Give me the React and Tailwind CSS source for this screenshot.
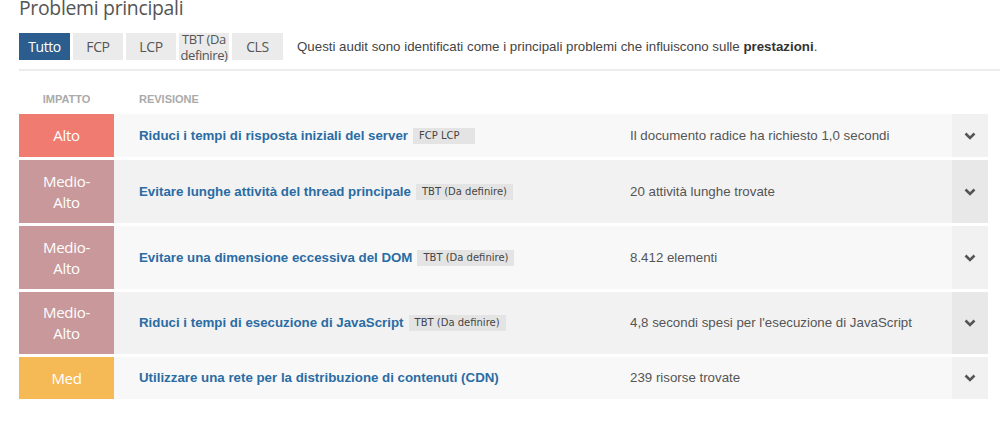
import React from "react";

const rows = [
  { impact: ["Alto"], color: "bg-[#ef7b71]", title: "Riduci i tempi di risposta iniziali del server", tag: "FCP LCP", tagW: "w-[62px]", desc: "Il documento radice ha richiesto 1,0 secondi", h: "h-[43px]", alt: false },
  { impact: ["Medio-", "Alto"], color: "bg-[#c9989a]", title: "Evitare lunghe attività del thread principale", tag: "TBT (Da definire)", desc: "20 attività lunghe trovate", h: "h-[63px]", alt: true },
  { impact: ["Medio-", "Alto"], color: "bg-[#c9989a]", title: "Evitare una dimensione eccessiva del DOM", tag: "TBT (Da definire)", desc: "8.412 elementi", h: "h-[63px]", alt: false },
  { impact: ["Medio-", "Alto"], color: "bg-[#c9989a]", title: "Riduci i tempi di esecuzione di JavaScript", tag: "TBT (Da definire)", desc: "4,8 secondi spesi per l'esecuzione di JavaScript", h: "h-[62px]", alt: true },
  { impact: ["Med"], color: "bg-[#f5b955]", title: "Utilizzare una rete per la distribuzione di contenuti (CDN)", tag: null, desc: "239 risorse trovate", h: "h-[42px]", alt: false },
];

function Chevron() {
  return (
    <svg width="12" height="8" viewBox="0 0 12 8" className="block">
      <path d="M1.5 1.5 L6 6 L10.5 1.5" fill="none" stroke="#555" strokeWidth="2.6" strokeLinecap="butt" />
    </svg>
  );
}

export default function App() {
  return (
    <div className="w-[1000px] h-[426px] bg-white overflow-hidden pl-[19px] font-['Liberation_Sans',Arial,sans-serif]">
      <h1 className="font-['Open_Sans',sans-serif] text-[19.4px] leading-[22px] text-[#555] -mt-[3px] tracking-[-0.3px]">
        Problemi principali
      </h1>
      <div className="flex items-center mt-[14px] h-[27px]">
        <div className="flex gap-[3px] font-['Open_Sans',sans-serif] text-[14px] tracking-[-0.4px]">
          <div className="w-[51px] h-[27px] flex items-center justify-center bg-[#2c5d8f] text-white">Tutto</div>
          <div className="w-[50px] h-[27px] flex items-center justify-center bg-[#ebebeb] text-[#555]">FCP</div>
          <div className="w-[50px] h-[27px] flex items-center justify-center bg-[#ebebeb] text-[#555]">LCP</div>
          <div className="w-[50px] h-[27px] flex flex-col items-center justify-center bg-[#ebebeb] text-[#555] text-[13px] leading-[16px]">
            <span>TBT (Da</span>
            <span>definire)</span>
          </div>
          <div className="w-[51px] h-[27px] flex items-center justify-center bg-[#ebebeb] text-[#555]">CLS</div>
        </div>
        <p className="ml-[14px] text-[13.3px] text-[#444]">
          Questi audit sono identificati come i principali problemi che influiscono sulle <b className="text-[#333]">prestazioni</b>.
        </p>
      </div>
      <div className="mt-[9px] h-[2px] bg-[#ececec]" />
      <div className="flex mt-[21px] h-[15px] items-center text-[11px] font-bold text-[#aaa] uppercase">
        <div className="w-[95px] text-center">Impatto</div>
        <div className="pl-[25px]">Revisione</div>
      </div>
      <div className="mt-[7px] flex flex-col gap-[3px] w-[969px]">
        {rows.map((r, i) => (
          <div key={i} className={`flex ${r.h}`}>
            <div className={`w-[95px] ${r.color} flex flex-col items-center justify-center text-white font-['Open_Sans',sans-serif] text-[15px] leading-[21px] tracking-[-0.3px]`}>
              {r.impact.map((t, j) => (
                <span key={j}>{t}</span>
              ))}
            </div>
            <div className={`flex-1 flex items-center ${r.alt ? "bg-[#f2f2f2]" : "bg-[#f8f8f8]"}`}>
              <div className="w-[516px] pl-[25px] flex items-center">
                <span className="text-[13.3px] font-bold text-[#2a6ca3]">{r.title}</span>
                {r.tag && (
                  <span className={`ml-[5px] h-[16px] px-[6px] bg-[#e4e4e4] text-[#444] text-[10px] leading-[16px] font-['DejaVu_Sans',Verdana,sans-serif] ${r.tagW || ""}`}>
                    {r.tag}
                  </span>
                )}
              </div>
              <div className="flex-1 text-[13.3px] text-[#555]">{r.desc}</div>
              <div className={`w-[36px] self-stretch flex items-center justify-center ${r.alt ? "bg-[#e8e8e8]" : "bg-[#f1f1f1]"}`}>
                <Chevron />
              </div>
            </div>
          </div>
        ))}
      </div>
    </div>
  );
}
